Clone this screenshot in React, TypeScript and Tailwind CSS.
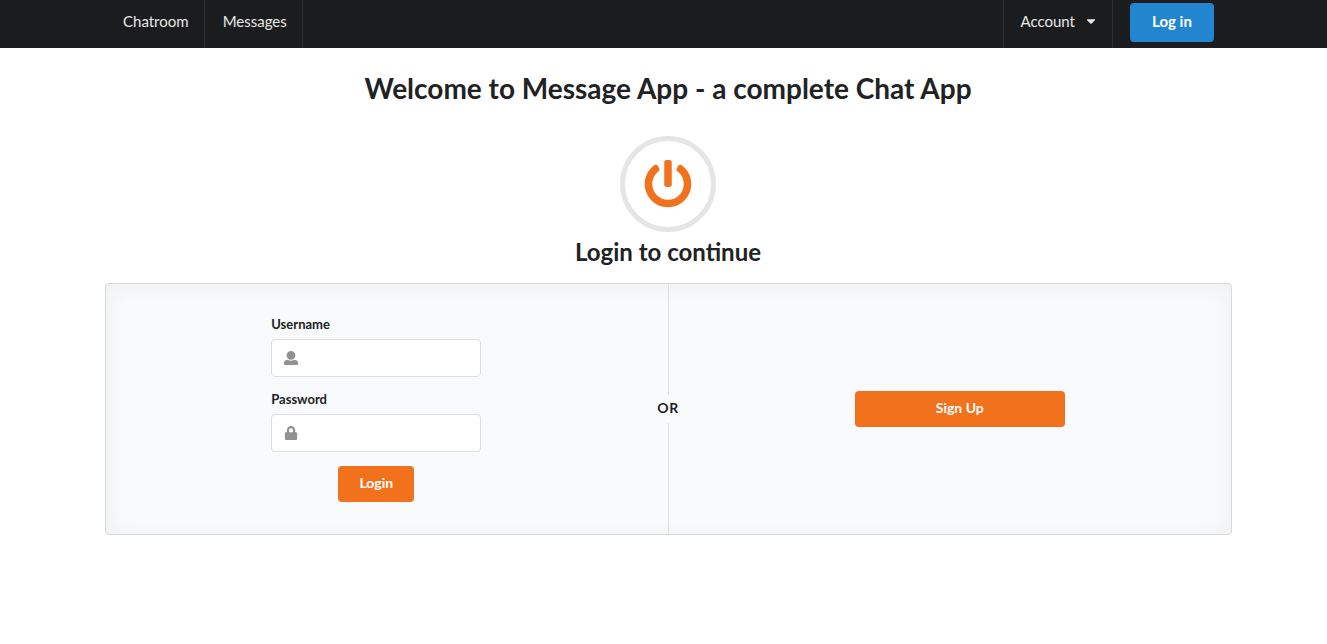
import React from "react";
import { FaCaretDown, FaLock, FaPowerOff } from "react-icons/fa";

function UserIcon({ className }: { className?: string }) {
  return (
    <svg viewBox="0 0 512 512" fill="currentColor" aria-hidden="true" className={className}>
      <path d="M256 0c88.366 0 160 71.634 160 160s-71.634 160-160 160S96 248.366 96 160 167.634 0 256 0zm183.283 333.821l-71.313-17.828c-74.923 53.89-165.738 41.864-223.94 0l-71.313 17.828C29.981 344.505 0 382.903 0 426.955V464c0 26.51 21.49 48 48 48h416c26.51 0 48-21.49 48-48v-37.045c0-44.052-29.981-82.45-72.717-93.134z" />
    </svg>
  );
}

function NavBar() {
  return (
    <nav className="bg-[#1b1c1d] pr-[95px] pl-[105px] text-[15px] leading-5 text-white/90">
      <div className="flex h-12 items-stretch">
        <a href="#chatroom" className="flex items-center border-r border-white/8 pr-[15px] pb-1.5 pl-[18px]">
          Chatroom
        </a>
        <a href="#messages" className="flex items-center border-r border-white/8 pr-[15px] pb-1.5 pl-[18px]">
          Messages
        </a>
        <div className="ml-auto flex items-stretch">
          <button
            type="button"
            aria-haspopup="menu"
            className="flex cursor-pointer items-center border-x border-white/8 pr-[14px] pb-1.5 pl-4"
          >
            Account
            <FaCaretDown className="ml-[9px] size-[14px]" aria-hidden="true" />
          </button>
          <div className="flex items-center pr-[18px] pb-[3px] pl-[17px]">
            <a
              href="#login"
              className="flex h-[39px] w-[84px] items-center justify-center rounded bg-[#2185d0] pb-[3px] font-bold text-white"
            >
              Log in
            </a>
          </div>
        </div>
      </div>
    </nav>
  );
}

function Field({
  id,
  label,
  type,
  icon,
}: {
  id: string;
  label: string;
  type: string;
  icon: React.ReactNode;
}) {
  return (
    <div className="w-full">
      <label htmlFor={id} className="mb-[5px] block text-[13px] leading-5 font-bold">
        {label}
      </label>
      <div className="relative">
        <span className="pointer-events-none absolute inset-y-0 left-0 flex w-10 items-center justify-center text-[#909191]">
          {icon}
        </span>
        <input
          id={id}
          name={id}
          type={type}
          className="h-[38px] w-full rounded border border-[#dededf] bg-white pr-3 pl-10 text-sm outline-none focus:border-[#85b7d9]"
        />
      </div>
    </div>
  );
}

export default function App() {
  return (
    <div className="min-h-screen bg-white font-['Lato',sans-serif] text-[#212223]">
      <NavBar />
      <main className="pt-[22px] pr-[95px] pl-[105px]">
        <header className="flex flex-col items-center pr-px">
          <h1 className="text-[28px] leading-9 font-bold">
            Welcome to Message App - a complete Chat App
          </h1>
          <div className="mt-[30px] flex size-24 items-center justify-center rounded-full border-[5px] border-[#e5e5e5]">
            <FaPowerOff className="size-12 text-[#f2711c]" aria-hidden="true" />
          </div>
          <h2 className="mt-1 text-2xl leading-8 font-bold">Login to continue</h2>
        </header>

        <section className="relative mt-[15px] grid w-full grid-cols-2 items-center gap-x-[43px] rounded border border-[#d8d9da] bg-[#f9fafb] pt-[30px] pr-px pb-8 shadow-[inset_0_2px_25px_rgba(34,36,38,0.05)]">
          <form
            className="flex w-[210px] flex-col items-center justify-self-center"
            onSubmit={(e) => e.preventDefault()}
          >
            <Field id="username" label="Username" type="text" icon={<UserIcon className="size-[14px]" />} />
            <div className="mt-3 w-full">
              <Field
                id="password"
                label="Password"
                type="password"
                icon={<FaLock className="size-[14px]" aria-hidden="true" />}
              />
            </div>
            <button
              type="submit"
              className="mt-[14px] h-9 w-[76px] cursor-pointer rounded bg-[#f2711c] pb-0.5 text-sm font-bold text-white"
            >
              Login
            </button>
          </form>

          <button
            type="button"
            className="mt-0.5 h-9 w-[210px] cursor-pointer justify-self-center rounded bg-[#f2711c] pb-0.5 text-sm font-bold text-white"
          >
            Sign Up
          </button>

          <div className="pointer-events-none absolute inset-0 flex flex-col items-center">
            <span className="w-px flex-1 bg-[#dededf]" />
            <span className="flex h-7 items-center pr-px pb-0.5 text-sm font-bold tracking-wider">OR</span>
            <span className="w-px flex-1 bg-[#dededf]" />
          </div>
        </section>
      </main>
    </div>
  );
}
